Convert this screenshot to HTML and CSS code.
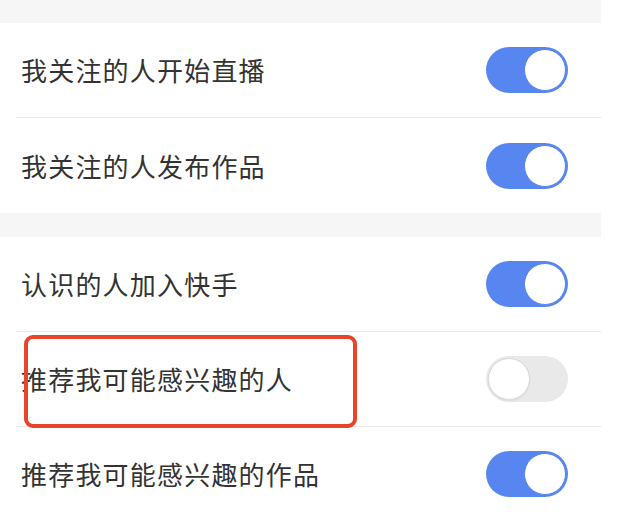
FILE: index.html
```html
<!DOCTYPE html>
<html lang="zh-cn">
<head>
    <meta charset="UTF-8">
    <meta name="viewport" content="width=device-width, initial-scale=1.0">
    <title>通知设置</title>
    <link rel="stylesheet" href="styles.css">
</head>
<body>
    <div class="settings">
        <div class="band"></div>

        <!-- 关注的人 -->
        <section class="group">
            <div class="row">
                <span class="label">我关注的人开始直播</span>
                <span class="switch on"><span class="knob"></span></span>
            </div>
            <div class="row">
                <span class="label">我关注的人发布作品</span>
                <span class="switch on"><span class="knob"></span></span>
            </div>
        </section>

        <div class="band"></div>

        <!-- 推荐 -->
        <section class="group">
            <div class="row">
                <span class="label">认识的人加入快手</span>
                <span class="switch on"><span class="knob"></span></span>
            </div>
            <div class="row marked">
                <span class="label">推荐我可能感兴趣的人</span>
                <span class="switch"><span class="knob"></span></span>
            </div>
            <div class="row">
                <span class="label">推荐我可能感兴趣的作品</span>
                <span class="switch on"><span class="knob"></span></span>
            </div>
        </section>
    </div>
</body>
</html>
```

FILE: styles.css
```css
:root {
    --blue: #5886f0;
    --line: #e8e8e8;
    --band: #f6f6f6;
}

body {
    margin: 0;
    background: #fff;
    font-family: "Noto Sans CJK SC", "Noto Sans", sans-serif;
    color: #333;
}

.settings {
    width: 601px;
}

/* 分组间的灰条 */
.band {
    height: 23px;
    background: var(--band);
}

.settings .group + .band {
    height: 24px;
}

.row {
    position: relative;
    height: 95px;
    box-sizing: border-box;
    margin-left: 16px;
    padding: 0 33px 0 5px;
    display: flex;
    align-items: center;
    justify-content: space-between;
    border-bottom: 1px solid var(--line);
}

.group .row:nth-child(2):last-child {
    border-bottom: none;
}

.label {
    font-size: 26px;
    letter-spacing: 1.2px;
    line-height: 1;
}

/* 开关 */
.switch {
    width: 82px;
    height: 46px;
    border-radius: 23px;
    background: #e9e9e9;
    display: flex;
    align-items: center;
    padding: 2px;
    box-sizing: border-box;
}

.switch .knob {
    width: 40px;
    height: 40px;
    border-radius: 50%;
    background: #fff;
    border: 1px solid #d8d8d8;
    box-shadow: 0 1px 2px rgba(0,0,0,0.06);
}

.switch.on {
    background: var(--blue);
    justify-content: flex-end;
}

.switch.on .knob {
    border-color: var(--blue);
    box-shadow: none;
}

/* 红色标注框 */
.marked::after {
    content: '';
    position: absolute;
    left: 8px;
    top: 3px;
    width: 333px;
    height: 93px;
    box-sizing: border-box;
    border: 4px solid #e8442c;
    border-radius: 9px;
}
```
